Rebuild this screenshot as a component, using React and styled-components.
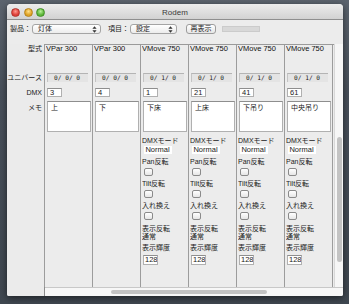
import React from "react";
import styled, { createGlobalStyle } from "styled-components";

const Global = createGlobalStyle`
  html, body { margin: 0; padding: 0; width: 349px; height: 304px; overflow: hidden; }
  body { background: #464e58; font-family: "Liberation Sans", "Noto Sans CJK JP", sans-serif; color: #1a1a1a; }
  * { box-sizing: border-box; }
`;

const Page = styled.div`
  width: 349px;
  height: 304px;
  padding: 4px 0 0 7px;
  background: linear-gradient(#5c646e, #48505a 30%, #3f4750);
`;

const Window = styled.div`
  width: 336px;
  height: 292px;
  display: flex;
  flex-direction: column;
  background: #ececec;
  border-radius: 4px 4px 2px 2px;
  box-shadow: 0 2px 7px rgba(0, 0, 0, 0.55);
  overflow: hidden;
`;

const TitleBar = styled.div`
  height: 16px;
  flex-shrink: 0;
  display: flex;
  align-items: center;
  padding: 0 4px;
  background: linear-gradient(#ececec, #d2d2d2);
  border-bottom: 1px solid #8f8f8f;
`;

const Lights = styled.div`
  width: 38px;
  display: flex;
  gap: 3.5px;
  margin-top: 1px;
`;

const Light = styled.span`
  width: 9px;
  height: 9px;
  border-radius: 50%;
  background: radial-gradient(circle at 50% 35%, ${(p) => p.$hi} 0%, ${(p) => p.$c} 60%);
  border: 0.5px solid ${(p) => p.$b};
`;

const Title = styled.div`
  flex: 1;
  text-align: center;
  font-size: 8px;
  color: #3a3a3a;
  margin-top: 1px;
`;

const Spacer = styled.div`
  width: 38px;
`;

const Toolbar = styled.div`
  height: 24px;
  flex-shrink: 0;
  display: flex;
  align-items: flex-start;
  padding: 4px 0 0 3px;
`;

const ToolLabel = styled.span`
  font-size: 7px;
  line-height: 10px;
  margin-left: ${(p) => p.$ml || 0}px;
  white-space: nowrap;
  color: #222;
`;

const Select = styled.div`
  width: ${(p) => p.$w}px;
  height: 10px;
  margin-left: 1px;
  border: 1px solid #a4a4a4;
  border-radius: 3px;
  background: linear-gradient(#ffffff, #ececec);
  display: flex;
  align-items: center;
  justify-content: space-between;
  padding: 0 3px 0 5px;
  font-size: 7px;
  line-height: 8px;
`;

const Button = styled.div`
  width: 30px;
  height: 10px;
  margin-left: ${(p) => p.$ml}px;
  border: 1px solid #9c9c9c;
  border-radius: 3px;
  background: linear-gradient(#ffffff, #e6e6e6);
  font-size: 7px;
  line-height: 8px;
  text-align: center;
`;

const Progress = styled.div`
  width: 38px;
  height: 6px;
  margin: 2px 0 0 6px;
  background: #d8d8d8;
  border: 1px solid #cbcbcb;
`;

const Body = styled.div`
  flex: 1;
  display: flex;
  min-height: 0;
`;

const LabelCol = styled.div`
  width: 37px;
  flex-shrink: 0;
  padding: 1px 2px 0 0;
  display: flex;
  flex-direction: column;
  align-items: flex-end;
  background: #ebebeb;
`;

const RowLabel = styled.div`
  height: ${(p) => p.$h}px;
  margin-top: ${(p) => p.$mt || 0}px;
  padding-top: ${(p) => p.$pt || 0}px;
  line-height: ${(p) => p.$lh}px;
  font-size: 7px;
  white-space: nowrap;
`;

const ScrollView = styled.div`
  flex: 1;
  display: flex;
  flex-direction: column;
  border-left: 1px solid #8c8c8c;
  min-width: 0;
`;

const Viewport = styled.div`
  flex: 1;
  display: flex;
  min-height: 0;
  min-width: 0;
`;

const Columns = styled.div`
  flex: 1;
  min-width: 0;
  display: flex;
  overflow: hidden;
  border-top: 1px solid #9a9a9a;
  margin-left: -1px;
`;

const Column = styled.div`
  width: 48px;
  flex-shrink: 0;
  border-left: 1px solid #9c9c9c;
  padding-left: 1px;
  display: flex;
  flex-direction: column;
  background: #ececec;
  overflow: hidden;
`;

const Header = styled.div`
  height: 28px;
  font-size: 7.5px;
  line-height: 7px;
  white-space: nowrap;
  overflow: hidden;
  color: #111;
`;

const Universe = styled.div`
  width: 41px;
  height: 9px;
  margin-left: 1px;
  padding-left: 6px;
  background: #e4e4e4;
  border-top: 1px solid #b4b4b4;
  border-left: 1px solid #c4c4c4;
  font-family: "DejaVu Sans Mono", "Liberation Mono", monospace;
  font-size: 6.2px;
  line-height: 8px;
  white-space: pre;
  overflow: hidden;
  color: #222;
`;

const Field = styled.div`
  width: ${(p) => p.$w}px;
  height: ${(p) => p.$h}px;
  margin-top: ${(p) => p.$mt || 0}px;
  margin-left: 1px;
  padding: ${(p) => p.$pad || "0 2px"};
  background: #fff;
  border: 1px solid #b0b0b0;
  border-top-color: #8e8e8e;
  font-size: ${(p) => p.$fs || 7.5}px;
  line-height: ${(p) => p.$lh || 7}px;
  white-space: nowrap;
  overflow: hidden;
`;

const ModeLabel = styled.div`
  margin-top: ${(p) => p.$mt || 0}px;
  height: 8px;
  line-height: 8px;
  font-size: 7px;
  white-space: nowrap;
  overflow: hidden;
`;

const NormalBox = styled.div`
  width: 28px;
  height: 8px;
  margin: 1px 0 0 1.5px;
  background: #fff;
  font-size: 7.5px;
  line-height: 8px;
  text-align: center;
  overflow: hidden;
`;

const Check = styled.div`
  width: 9px;
  height: 8px;
  margin: 2px 0 0 1.5px;
  border: 1px solid #8a8a8a;
  border-radius: 2px;
  background: linear-gradient(#ffffff, #e6e6e6);
`;

const VScroll = styled.div`
  width: 9px;
  flex-shrink: 0;
  background: #f6f6f6;
  border-left: 1px solid #d8d8d8;
  padding: 93px 0 0 2px;
`;

const VThumb = styled.div`
  width: 5px;
  height: 125px;
  border-radius: 3px;
  background: #c3c3c3;
`;

const HScroll = styled.div`
  height: 9px;
  flex-shrink: 0;
  background: #f7f7f7;
  border-top: 1px solid #c8c8c8;
  padding: 2px 0 0 66px;
`;

const HThumb = styled.div`
  width: 156px;
  height: 4px;
  border-radius: 3px;
  background: #c3c3c3;
`;

const Arrows = () => (
  <svg width="5" height="7" viewBox="0 0 5 7">
    <path d="M2.5 0.3 L4.6 2.8 L0.4 2.8 Z M2.5 6.7 L4.6 4.2 L0.4 4.2 Z" fill="#333" />
  </svg>
);

const devices = [
  { name: "VPar 300", uni: "0/ 0/ 0", dmx: "3", memo: "上" },
  { name: "VPar 300", uni: "0/ 0/ 0", dmx: "4", memo: "下" },
  { name: "VMove 750", uni: "0/ 1/ 0", dmx: "1", memo: "下床", mode: true },
  { name: "VMove 750", uni: "0/ 1/ 0", dmx: "21", memo: "上床", mode: true },
  { name: "VMove 750", uni: "0/ 1/ 0", dmx: "41", memo: "下吊り", mode: true },
  { name: "VMove 750", uni: "0/ 1/ 0", dmx: "61", memo: "中央吊り", mode: true },
  { name: "VMove 750", uni: "0/ 1/ 0", dmx: "81", memo: "上吊り", mode: true },
];

const DeviceColumn = ({ d }) => (
  <Column>
    <Header>{d.name}</Header>
    <Universe>{d.uni}</Universe>
    <Field $w={15} $h={9} $mt={6}>{d.dmx}</Field>
    <Field $w={44} $h={31} $mt={4} $pad="2px 3px" $fs={7} $lh={8}>{d.memo}</Field>
    {d.mode && (
      <>
        <ModeLabel $mt={5}>DMXモード</ModeLabel>
        <NormalBox>Normal</NormalBox>
        <ModeLabel $mt={4}>Pan反転</ModeLabel>
        <Check />
        <ModeLabel $mt={4}>Tilt反転</ModeLabel>
        <Check />
        <ModeLabel $mt={4}>入れ換え</ModeLabel>
        <Check />
        <ModeLabel $mt={5}>表示反転</ModeLabel>
        <ModeLabel>通常</ModeLabel>
        <ModeLabel $mt={3}>表示輝度</ModeLabel>
        <Field $w={15} $h={10} $mt={3} $lh={8} $pad="0 1px">128</Field>
      </>
    )}
  </Column>
);

export default function App() {
  return (
    <>
      <Global />
      <Page>
        <Window>
          <TitleBar>
            <Lights>
              <Light $c="#dd3f38" $hi="#ff9a8f" $b="#b0332c" />
              <Light $c="#dfa224" $hi="#ffe08a" $b="#b58119" />
              <Light $c="#5db63a" $hi="#b8f09a" $b="#3f8d25" />
            </Lights>
            <Title>Rodem</Title>
            <Spacer />
          </TitleBar>
          <Toolbar>
            <ToolLabel>製品：</ToolLabel>
            <Select $w={69}>
              <span>灯体</span>
              <Arrows />
            </Select>
            <ToolLabel $ml={7}>項目：</ToolLabel>
            <Select $w={47}>
              <span>設定</span>
              <Arrows />
            </Select>
            <Button $ml={9}>再表示</Button>
            <Progress />
          </Toolbar>
          <Body>
            <LabelCol>
              <RowLabel $h={28} $lh={7}>型式</RowLabel>
              <RowLabel $h={9} $lh={9}>ユニバース</RowLabel>
              <RowLabel $h={9} $lh={9} $mt={6}>DMX</RowLabel>
              <RowLabel $h={31} $lh={8} $mt={4} $pt={3}>メモ</RowLabel>
            </LabelCol>
            <ScrollView>
              <Viewport>
                <Columns>
                  {devices.map((d, i) => (
                    <DeviceColumn key={i} d={d} />
                  ))}
                </Columns>
                <VScroll>
                  <VThumb />
                </VScroll>
              </Viewport>
              <HScroll>
                <HThumb />
              </HScroll>
            </ScrollView>
          </Body>
        </Window>
      </Page>
    </>
  );
}
